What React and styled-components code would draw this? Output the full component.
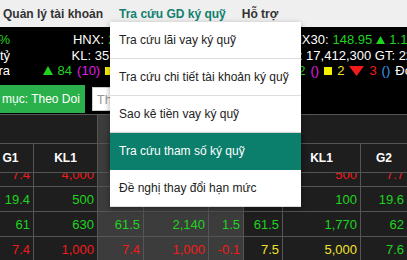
import React from 'react';
import styled, { createGlobalStyle } from 'styled-components';

const GlobalStyle = createGlobalStyle`
  html, body {
    margin: 0;
    padding: 0;
    background: #000;
    overflow: hidden;
  }
  body {
    font-family: "Liberation Sans", Arial, sans-serif;
  }
`;

const C = {
  g: '#1fd41f',
  r: '#f21b1b',
  y: '#f2e22c',
  m: '#e61ee6',
  b: '#3a9cf5',
  w: '#ffffff',
};

const Page = styled.div`
  position: relative;
  width: 407px;
  height: 260px;
  overflow: hidden;
  background: #000;
`;

/* top menu bar */
const NavBar = styled.nav`
  display: flex;
  align-items: center;
  gap: 16px;
  height: 27px;
  padding: 1px 0 0 3px;
  box-sizing: border-box;
  background: #efefef;
  font-size: 12px;
  font-weight: bold;
`;

const NavItem = styled.span`
  color: ${p => (p.$active ? '#11806f' : '#333')};
  white-space: nowrap;
`;

/* index strip */
const InfoStrip = styled.div`
  display: flex;
  height: 58px;
  padding-top: 5px;
  box-sizing: border-box;
  color: #fff;
  font-size: 13px;
  line-height: 15.5px;
  white-space: nowrap;
`;

const IndexBox = styled.div`
  flex: 0 0 ${p => p.$w}px;
  box-sizing: border-box;
  padding-left: ${p => p.$pad || 0}px;
  display: flex;
  flex-direction: column;
  align-items: ${p => p.$align || 'center'};
  overflow: ${p => (p.$align === 'flex-end' ? 'hidden' : 'visible')};
`;

const Line = styled.div`
  display: flex;
  align-items: center;
  gap: ${p => p.$gap ?? 4}px;
  height: 15.5px;
  margin-left: ${p => p.$indent || 0}px;
`;

const Tx = styled.span`
  color: ${p => C[p.$c || 'w']};
`;

const Square = styled.span`
  width: 8px;
  height: 8px;
  background: #f5f000;
`;

const Tri = ({ down, color, w = 10, h = 9 }) => (
  <svg width={w} height={h} viewBox="0 0 10 10" preserveAspectRatio="none">
    <polygon points={down ? '0,0 10,0 5,10' : '5,0 10,10 0,10'} fill={color} />
  </svg>
);

/* controls row */
const Controls = styled.div`
  display: flex;
  align-items: flex-start;
  height: 29px;
  gap: 7px;
`;

const ListButton = styled.button`
  height: 28px;
  margin-left: -35px;
  padding: 0 5px;
  border: 0;
  background: #2bb14b;
  color: #fff;
  font-family: inherit;
  font-size: 12px;
  white-space: nowrap;
`;

const SymbolInput = styled.input`
  width: 200px;
  height: 24px;
  margin-top: 2px;
  box-sizing: border-box;
  border: 1px solid #ccc;
  padding: 0 4px;
  font-family: inherit;
  font-size: 13px;
  &::placeholder { color: #999; }
`;

/* price board */
const COLS = '46px 64px 46px 65px 35px 39px 78px 47px 78px';

const Board = styled.div`
  margin-left: -12px;
  border-top: 1px solid #555;
  background: #1e1e1e;
`;

const Row = styled.div`
  display: grid;
  grid-template-columns: ${COLS};
  height: ${p => p.$h}px;
  box-sizing: border-box;
  border-bottom: 1px solid #555;
`;

const HeadCell = styled.div`
  grid-column: span ${p => p.$span || 1};
  display: flex;
  align-items: center;
  justify-content: center;
  border-right: 1px solid #555;
  background: ${p => (p.$gray ? '#3c3c3c' : '#1e1e1e')};
  color: #fff;
  font-size: 12px;
  font-weight: bold;
`;

const BodyView = styled.div`
  height: 88px;
  overflow: hidden;
`;

const BodyInner = styled.div`
  margin-top: -11px;
`;

const Cell = styled.div`
  display: flex;
  align-items: center;
  justify-content: flex-end;
  padding-right: 3px;
  border-right: 1px solid #555;
  background: ${p => (p.$gray ? '#3c3c3c' : '#1e1e1e')};
  color: ${p => C[p.$c] || '#fff'};
  font-size: 13px;
`;

/* dropdown */
const Menu = styled.ul`
  position: absolute;
  top: 22px;
  left: 110px;
  width: 191px;
  margin: 0;
  padding: 0;
  list-style: none;
  background: #fff;
  box-shadow: 0 2px 6px rgba(0, 0, 0, 0.35);
  z-index: 5;
`;

const MenuItem = styled.li`
  position: relative;
  display: flex;
  align-items: center;
  height: 37px;
  padding-left: 9px;
  box-sizing: border-box;
  border-bottom: 1px solid ${p => (p.$active ? '#0b7e6c' : '#ddd')};
  background: ${p => (p.$active ? '#0b7e6c' : '#fff')};
  color: ${p => (p.$active ? '#fff' : '#222')};
  box-shadow: ${p => (p.$active ? '0 3px 6px rgba(0,0,0,0.35)' : 'none')};
  font-size: 12px;
  white-space: nowrap;
`;

const menuItems = [
  'Tra cứu lãi vay ký quỹ',
  'Tra cứu chi tiết tài khoản ký quỹ',
  'Sao kê tiền vay ký quỹ',
  'Tra cứu tham số ký quỹ',
  'Đề nghị thay đổi hạn mức',
];

// [value, colour] per column: G1 KL1 | Giá KL +/- | G1 KL1 G2 KL2
const rows = [
  [['7.4', 'r'], ['4,000', 'r'], ['7.5', 'r'], ['1,200', 'r'], ['-0', 'r'], ['7.6', 'r'], ['500', 'r'], ['7.7', 'r'], ['900', 'r']],
  [['19.4', 'g'], ['500', 'g'], ['19.5', 'g'], ['300', 'g'], ['0.4', 'g'], ['19.5', 'g'], ['100', 'g'], ['19.6', 'g'], ['200', 'g']],
  [['61', 'g'], ['630', 'g'], ['61.5', 'g'], ['2,140', 'g'], ['1.5', 'g'], ['61.5', 'g'], ['1,770', 'g'], ['62', 'g'], ['300', 'g']],
  [['7.4', 'r'], ['1,000', 'r'], ['7.4', 'r'], ['1,000', 'r'], ['-0.1', 'r'], ['7.5', 'y'], ['5,000', 'y'], ['7.6', 'g'], ['2,000', 'g']],
];

const subHeads = ['G1', 'KL1', 'Giá', 'KL', '+/-', 'G1', 'KL1', 'G2', 'KL2'];
const isGray = i => i >= 2 && i <= 4;

export default function App() {
  return (
    <Page>
      <GlobalStyle />
      <NavBar>
        <NavItem>Quản lý tài khoản</NavItem>
        <NavItem $active>Tra cứu GD ký quỹ</NavItem>
        <NavItem>Hỗ trợ</NavItem>
      </NavBar>

      <InfoStrip>
        <IndexBox $w={10} $align="flex-end">
          <Line><Tx $c="g">VN30: 1,241.56 ▲ 6.2 0.52%</Tx></Line>
          <Line><Tx>KL: 98,120,400 GT: 3,456.7 tỷ</Tx></Line>
          <Line><Tx>Liên tục Tra</Tx></Line>
        </IndexBox>
        <IndexBox $w={273} $pad={12}>
          <Line>
            <Tx>HNX:</Tx>
            <Tx $c="g">242.15</Tx>
            <Tri color={C.g} w={9} h={8} />
            <Tx $c="g">1.27 (0.5%)</Tx>
          </Line>
          <Line><Tx>KL: 35,912,400 GT: 683.4 tỷ</Tx></Line>
          <Line $gap={5}>
            <Tri color={C.g} />
            <Tx $c="g">84</Tx>
            <Tx $c="m">(10)</Tx>
            <Square />
            <Tx $c="y">95</Tx>
            <Tri down color={C.r} w={15} h={10} />
            <Tx $c="r">102</Tx>
            <Tx $c="b">(5)</Tx>
            <Tx>Đóng cửa</Tx>
          </Line>
        </IndexBox>
        <IndexBox $w={200} $align="flex-start">
          <Line>
            <Tx>HNX30:</Tx>
            <Tx $c="g">148.95</Tx>
            <Tri color={C.g} w={9} h={8} />
            <Tx $c="g">1.15 (0.78%)</Tx>
          </Line>
          <Line><Tx>KL: 17,412,300 GT: 225.63 tỷ</Tx></Line>
          <Line $gap={5} $indent={-7}>
            <Tri color={C.g} />
            <Tx $c="g">12</Tx>
            <Tx $c="m">()</Tx>
            <Square />
            <Tx $c="y">2</Tx>
            <Tri down color={C.r} w={15} h={10} />
            <Tx $c="r">3</Tx>
            <Tx $c="b">()</Tx>
            <Tx>Đóng cửa</Tx>
          </Line>
        </IndexBox>
      </InfoStrip>

      <Controls>
        <ListButton>Danh mục: Theo Doi</ListButton>
        <SymbolInput placeholder="Thêm mã CK vào danh mục" />
      </Controls>

      <Board>
        <Row $h={29}>
          <HeadCell $span={2} />
          <HeadCell $span={3} $gray>Khớp lệnh</HeadCell>
          <HeadCell $span={4} />
        </Row>
        <Row $h={29}>
          {subHeads.map((h, i) => (
            <HeadCell key={i} $gray={isGray(i)}>{h}</HeadCell>
          ))}
        </Row>
        <BodyView>
          <BodyInner>
            {rows.map((r, ri) => (
              <Row key={ri} $h={25}>
                {r.map(([v, c], ci) => (
                  <Cell key={ci} $c={c} $gray={isGray(ci)}>{v}</Cell>
                ))}
              </Row>
            ))}
          </BodyInner>
        </BodyView>
      </Board>

      <Menu>
        {menuItems.map((m, i) => (
          <MenuItem key={m} $active={i === 3}>{m}</MenuItem>
        ))}
      </Menu>
    </Page>
  );
}
